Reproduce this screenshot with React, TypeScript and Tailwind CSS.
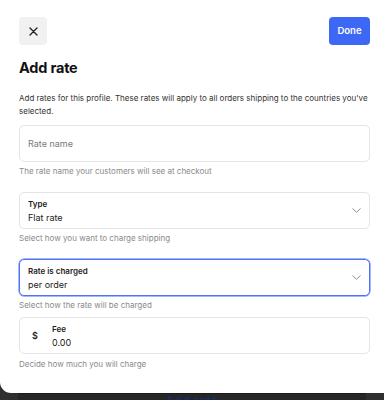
import React from "react";

function Chevron() {
  return (
    <svg width="9" height="5" viewBox="0 0 9 5" fill="none" className="shrink-0">
      <path d="M0.75 0.75l3.75 3.5 3.75-3.5" stroke="#8f8f8f" strokeWidth="1" strokeLinecap="round" strokeLinejoin="round" />
    </svg>
  );
}

export default function App() {
  return (
    <div
      className="w-[384px] h-[400px] overflow-hidden bg-[#2f2f2f] flex flex-col"
      style={{ fontFamily: "Inter, 'Noto Sans', sans-serif" }}
    >
      <div className="h-[393px] shrink-0 bg-white rounded-bl-[11px] pl-[19px] pr-[14px] pt-[17px] flex flex-col">
        <div className="flex items-center justify-between h-[28px]">
          <button className="w-[28px] h-[28px] rounded-[4px] bg-[#f1f1f1] flex items-center justify-center">
            <svg width="9" height="9" viewBox="0 0 9 9" fill="none">
              <path d="M1 1l7 7M8 1l-7 7" stroke="#1f1f1f" strokeWidth="1.3" strokeLinecap="round" />
            </svg>
          </button>
          <button className="w-[41px] h-[28px] rounded-[4px] bg-[#3d68f5] text-white text-[9.5px] font-semibold flex items-center justify-center">
            Done
          </button>
        </div>

        <h1 className="mt-[13px] text-[14.5px] leading-[20px] font-bold text-[#111] tracking-[-0.2px]">Add rate</h1>

        <p className="mt-[14px] text-[8px] leading-[13px] text-[#333]">
          Add rates for this profile. These rates will apply to all orders shipping to the countries you've selected.
        </p>

        <div className="mt-[7px] h-[37px] border border-[#e4e4e4] rounded-[5px] flex items-center pl-[8px]">
          <span className="text-[9px] text-[#7a7a7a]">Rate name</span>
        </div>
        <p className="mt-[3px] text-[8px] leading-[12px] text-[#8a8a8a]">The rate name your customers will see at checkout</p>

        <div className="mt-[15px] h-[37px] border border-[#e4e4e4] rounded-[5px] flex items-center justify-between pl-[8px] pr-[8px]">
          <div className="flex flex-col gap-[3px] pt-[1px]">
            <span className="text-[8px] leading-[10px] font-semibold text-[#222]">Type</span>
            <span className="text-[9px] leading-[12px] text-[#1a1a1a]">Flat rate</span>
          </div>
          <Chevron />
        </div>
        <p className="mt-[3px] text-[8px] leading-[12px] text-[#8a8a8a]">Select how you want to charge shipping</p>

        <div className="mt-[15px] h-[37px] border border-[#4d74f2] shadow-[0_0_0_0.5px_#4d74f2] rounded-[5px] flex items-center justify-between pl-[8px] pr-[8px]">
          <div className="flex flex-col gap-[3px] pt-[1px]">
            <span className="text-[8px] leading-[10px] font-semibold text-[#222]">Rate is charged</span>
            <span className="text-[9px] leading-[12px] text-[#1a1a1a]">per order</span>
          </div>
          <Chevron />
        </div>
        <p className="mt-[3px] text-[8px] leading-[12px] text-[#8a8a8a]">Select how the rate will be charged</p>

        <div className="mt-[6px] h-[37px] border border-[#e4e4e4] rounded-[5px] flex items-center pl-[12px]">
          <span className="text-[9px] font-semibold text-[#222] w-[20px]">$</span>
          <div className="flex flex-col gap-[3px] pt-[1px]">
            <span className="text-[8px] leading-[10px] font-semibold text-[#222]">Fee</span>
            <span className="text-[9px] leading-[12px] text-[#1a1a1a]">0.00</span>
          </div>
        </div>
        <p className="mt-[4px] text-[8px] leading-[12px] text-[#8a8a8a]">Decide how much you will charge</p>
      </div>

      <div className="flex-1 mx-[18px] bg-[#262626] border-t border-[#1a1a1a] overflow-hidden flex justify-center">
        <span className="text-[13px] leading-[13px] font-bold text-[#1c2a5e] mt-[1px]">Add rate</span>
      </div>
    </div>
  );
}
